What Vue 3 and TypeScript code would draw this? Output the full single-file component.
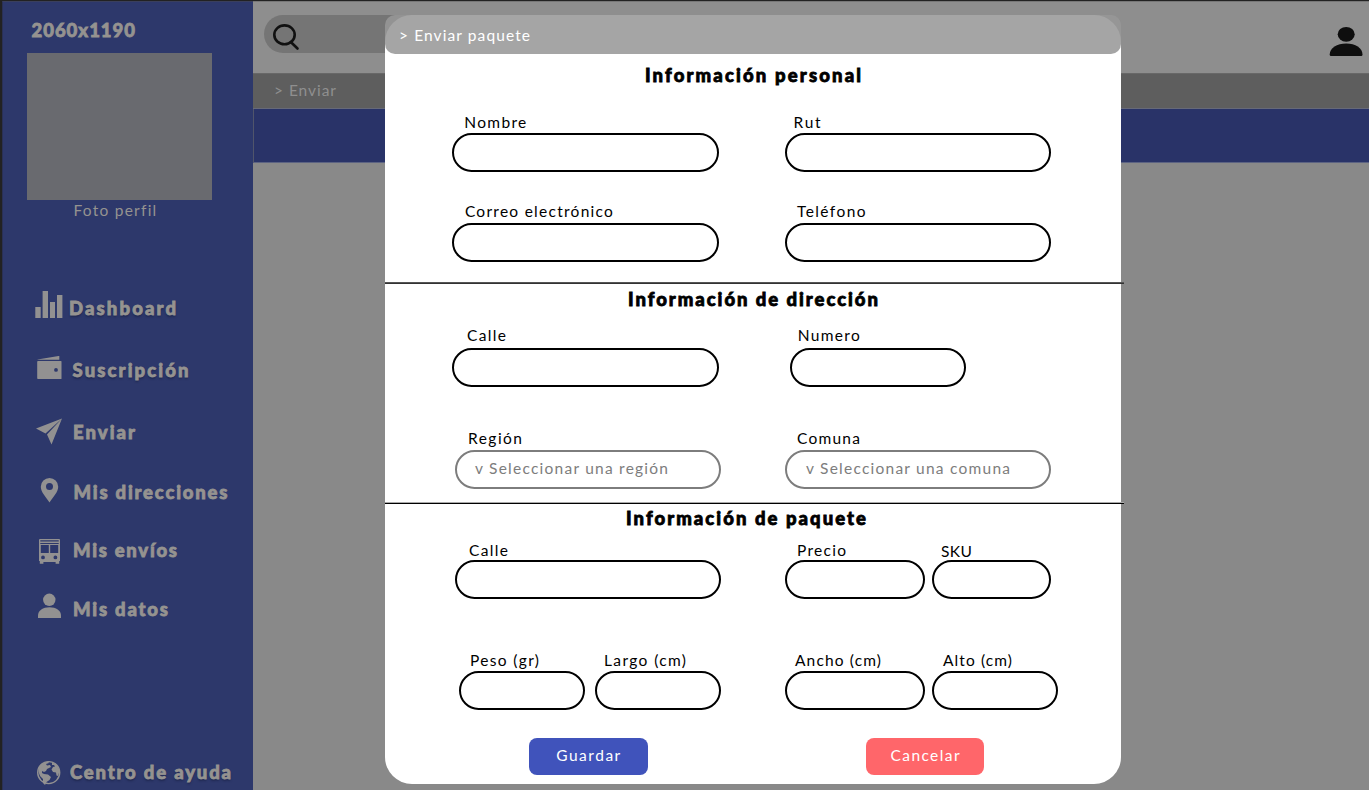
<script setup lang="ts">
interface NavItem {
  text: string
  icon: string
  width: number
  indent: number
  drop: number
  shadow?: boolean
}
interface Field {
  label: string
  labelWidth: number
  indent: number
  offset: number
  width: number
  placeholder?: string
  placeholderWidth?: number
  placeholderIndent?: number
  low?: boolean
}
interface Row {
  id: string
  fields: Field[]
}
interface Section {
  id: string
  title: string
  titleWidth: number
  rows: Row[]
}

const nav: NavItem[] = [
  { text: 'Dashboard', icon: 'bars', width: 107, indent: 6, drop: 5, shadow: true },
  { text: 'Suscripción', icon: 'wallet', width: 116, indent: 9.5, drop: 3, shadow: true },
  { text: 'Enviar', icon: 'plane', width: 62, indent: 10, drop: 3 },
  { text: 'Mis direcciones', icon: 'pin', width: 154, indent: 10.5, drop: 3 },
  { text: 'Mis envíos', icon: 'bus', width: 104, indent: 10, drop: 0 },
  { text: 'Mis datos', icon: 'person', width: 95, indent: 10, drop: 5 },
]

const sections: Section[] = [
  {
    id: 'personal', title: 'Información personal', titleWidth: 216,
    rows: [
      { id: 'r1', fields: [
        { label: 'Nombre', labelWidth: 62, indent: 12, offset: 67.3, width: 266.3 },
        { label: 'Rut', labelWidth: 27, indent: 8.6, offset: 66.4, width: 266.3 },
      ] },
      { id: 'r2', fields: [
        { label: 'Correo electrónico', labelWidth: 148, indent: 12.6, offset: 67.3, width: 266.3 },
        { label: 'Teléfono', labelWidth: 68.5, indent: 12, offset: 66.4, width: 266.3 },
      ] },
    ],
  },
  {
    id: 'direccion', title: 'Información de dirección', titleWidth: 250,
    rows: [
      { id: 'r3', fields: [
        { label: 'Calle', labelWidth: 39, indent: 14.7, offset: 67.3, width: 266.3 },
        { label: 'Numero', labelWidth: 62, indent: 7.6, offset: 71.6, width: 176 },
      ] },
      { id: 'r4', fields: [
        { label: 'Región', labelWidth: 54, indent: 13, offset: 70, width: 266.3, placeholder: 'v Seleccionar una región', placeholderWidth: 193, placeholderIndent: 18 },
        { label: 'Comuna', labelWidth: 63, indent: 12, offset: 63.7, width: 266.3, placeholder: 'v Seleccionar una comuna', placeholderWidth: 204, placeholderIndent: 19 },
      ] },
    ],
  },
  {
    id: 'paquete', title: 'Información de paquete', titleWidth: 240,
    rows: [
      { id: 'r5', fields: [
        { label: 'Calle', labelWidth: 39, indent: 14, offset: 70, width: 266.3 },
        { label: 'Precio', labelWidth: 49, indent: 12, offset: 63.7, width: 140 },
        { label: 'SKU', labelWidth: 31, indent: 9, offset: 7, width: 119.3, low: true },
      ] },
      { id: 'r6', fields: [
        { label: 'Peso (gr)', labelWidth: 69, indent: 11, offset: 74, width: 126.3 },
        { label: 'Largo (cm)', labelWidth: 82, indent: 9, offset: 9.7, width: 126.3 },
        { label: 'Ancho (cm)', labelWidth: 86, indent: 10, offset: 63.7, width: 140 },
        { label: 'Alto (cm)', labelWidth: 69, indent: 11, offset: 7, width: 126.3 },
      ] },
    ],
  },
]

// Tracks a single line of text so that it spans the given width.
const vTrack = {
  mounted(el: HTMLElement, binding: { value: number }) {
    const gaps = (el.textContent ?? '').length - 1
    const natural = el.getBoundingClientRect().width
    if (gaps > 0) {
      const spacing = (binding.value - natural) / gaps
      el.style.letterSpacing = spacing.toFixed(3) + 'px'
      el.style.marginRight = (-spacing).toFixed(3) + 'px'
    }
  },
}
</script>

<template>
  <div class="screen">
    <aside class="sidebar">
      <div class="size"><span v-track="103.5">2060x1190</span></div>
      <div class="photo"></div>
      <div class="caption"><span v-track="82.5">Foto perfil</span></div>
      <nav class="nav">
        <a v-for="item in nav" :key="item.text" class="nav-item">
          <svg class="nav-icon" viewBox="0 0 28 28">
            <g v-if="item.icon === 'bars'">
              <path d="M0.3 16h5.4v11H0.3zM7.6 0h5.4v27H7.6zM15 11h5v16h-5zM22 4h5.4v23H22z" />
            </g>
            <g v-else-if="item.icon === 'wallet'">
              <path d="M2.5 4.5 23.5 1h.8v3.8H2.5z" />
              <path fill-rule="evenodd" d="M3 6h23q.5 0 .5.5v17q0 .5-.5.5H3q-.8 0-.8-.8V6.8q0-.8.8-.8zM21 13a1.900 1.900 0 1 0 0 3.800a1.900 1.900 0 1 0 0-3.800z" />
            </g>
            <g v-else-if="item.icon === 'plane'">
              <path d="M1 11.500 27 1.500 10.500 16.500zM27 1.500 16.500 27.500 12 17.500z" />
            </g>
            <g v-else-if="item.icon === 'pin'">
              <path fill-rule="evenodd" d="M14.500 1A8.700 8.700 0 0 0 5.800 9.700C5.800 15 11 20 14.500 25.500C18 20 23.200 15 23.200 9.700A8.700 8.700 0 0 0 14.500 1zM14.500 5.900a3.500 3.500 0 1 1 0 7a3.500 3.500 0 1 1 0-7z" />
            </g>
            <g v-else-if="item.icon === 'bus'">
              <path fill-rule="evenodd" d="M5 1h19q1 0 1 1v21h-.8v2.800h-3.600V24H8.400v1.800H4.800V23H4V2q0-1 1-1zM5.300 2.200V3.500H23.700V2.200zM5.300 5V6H23.700V5zM5.800 7v8H13.800V7zM15.200 7v8h8V7zM8 17.500a1.900 1.900 0 1 0 0 3.800a1.900 1.900 0 1 0 0-3.800zM20.400 17.500a1.900 1.900 0 1 0 0 3.800a1.900 1.900 0 1 0 0-3.800z" />
            </g>
            <g v-else>
              <circle cx="14.300" cy="7.800" r="6.200" />
              <path d="M3 26v-2.500C3 18.500 8 15.300 14.500 15.300S26 18.500 26 23.500V26z" />
            </g>
          </svg>
          <span
            class="nav-text"
            :class="{ shadow: item.shadow }"
            :style="{ marginLeft: item.indent + 'px', marginTop: item.drop + 'px' }"
          >
            <span v-track="item.width">{{ item.text }}</span>
          </span>
        </a>
      </nav>
      <a class="nav-item help">
        <svg class="nav-icon" viewBox="0 0 28 28">
          <circle class="globe-ring" cx="13.700" cy="13.600" r="11" />
          <path d="M3.500 9Q6 3.500 13 2.500l1 1.500-3 1 1 1.500 3-.5 1 2-4 2-1 2-2 1-2-1 0 2 2 1 4 .5 3 2.500-1.500 3-3 2-1.500 3-2-2v-4l-3-3-1.500-4z" />
          <path d="M17 3.500l4 1.500 3 5 .3 3-1.300 4-1.500-.5-.5-3-3-.5-1.500-2.500 1.500-2.500 2-.5-1-1.500-2 0z" />
        </svg>
        <span class="nav-text help-text shadow"><span v-track="161">Centro de ayuda</span></span>
      </a>
    </aside>

    <main class="main">
      <header class="topbar">
        <div class="search">
          <svg class="search-icon" viewBox="0 0 30 30">
            <ellipse cx="12.500" cy="12.800" rx="10.200" ry="9.400" />
            <path d="M18.800 20 25.500 26.500" />
          </svg>
        </div>
        <svg class="user" viewBox="0 0 34 32">
          <ellipse cx="17.200" cy="9.300" rx="8.500" ry="7.400" />
          <path d="M.7 29.500C.7 23 8 18.500 17.200 18.500S33.500 23 33.500 29.500Q33.500 31 32.300 31H2Q.7 31 .7 29.500z" />
        </svg>
      </header>
      <div class="crumbs"><span v-track="62">&gt; Enviar</span></div>
      <div class="band"></div>
    </main>

    <div class="modal">
      <header class="modal-head"><span v-track="131">&gt; Enviar paquete</span></header>
      <section v-for="section in sections" :key="section.id" class="section" :class="section.id">
        <h2 class="title"><span v-track="section.titleWidth">{{ section.title }}</span></h2>
        <div v-for="row in section.rows" :key="row.id" class="row" :class="row.id">
          <div
            v-for="field in row.fields"
            :key="field.label"
            class="field"
            :style="{ marginLeft: field.offset + 'px', width: field.width + 'px' }"
          >
            <div class="label" :class="{ low: field.low }" :style="{ paddingLeft: field.indent + 'px' }">
              <span v-track="field.labelWidth">{{ field.label }}</span>
            </div>
            <div v-if="field.placeholder" class="box select" :style="{ paddingLeft: field.placeholderIndent + 'px' }">
              <span v-track="field.placeholderWidth ?? 0">{{ field.placeholder }}</span>
            </div>
            <div v-else class="box"></div>
          </div>
        </div>
      </section>
      <footer class="actions">
        <button class="button save"><span v-track="64">Guardar</span></button>
        <button class="button cancel"><span v-track="69">Cancelar</span></button>
      </footer>
    </div>
  </div>
</template>

<style>
body {
  margin: 0;
  overflow: hidden;
}
</style>

<style scoped>
.screen {
  position: relative;
  display: flex;
  box-sizing: border-box;
  width: 1369px;
  height: 790px;
  padding: 1px 0 0 2px;
  overflow: hidden;
  background: #222222;
  font-family: Lato, "Noto Sans", sans-serif;
  font-size: 15.5px;
  line-height: 20px;
  white-space: nowrap;
}
.sidebar {
  flex: none;
  display: flex;
  flex-direction: column;
  box-sizing: border-box;
  width: 251px;
  height: 789px;
  border-left: 1px solid #2a3055;
  border-top: 1px solid #3a3f5c;
  background: #2d386b;
  color: #959390;
}
.size,
.nav-text,
.title {
  font-size: 18.5px;
  font-weight: 900;
  line-height: 24px;
  -webkit-text-stroke: 0.8px currentColor;
}
.size {
  margin: 16px 0 0 28.5px;
  height: 24px;
}
.photo {
  width: 185px;
  height: 147px;
  margin: 10.5px 0 0 24px;
  background: #696a6f;
}
.caption {
  margin: 0.5px 0 0 70.5px;
  height: 20px;
}
.nav {
  display: grid;
  grid-template-rows: 64px 62px 60px 61px 54px 28px;
  margin: 71px 0 0 32px;
}
.nav-item {
  display: flex;
  align-items: flex-start;
  height: 28px;
}
.nav-icon {
  flex: none;
  width: 28px;
  height: 28px;
  fill: #929191;
}
.globe-ring {
  fill: none;
  stroke: #929191;
  stroke-width: 1.4;
}
.shadow {
  text-shadow: 0 2px 2px rgba(20, 25, 55, 0.5);
}
.help {
  margin: 139px 0 0 32px;
}
.help-text {
  margin: 1px 0 0 7px;
}
.main {
  flex: 1;
  background: #898989;
}
.topbar {
  display: flex;
  justify-content: space-between;
  box-sizing: border-box;
  height: 72px;
  padding: 13px 6px 0 11px;
  border-top: 1px solid #777777;
  background: #8e8e8e;
}
.search {
  box-sizing: border-box;
  width: 830px;
  height: 38.5px;
  padding: 7px 8px;
  margin-top: -0.5px;
  border-radius: 19px;
  background: #757575;
}
.search-icon {
  display: block;
  width: 30px;
  height: 30px;
  fill: none;
  stroke: #111111;
  stroke-width: 2.6;
  stroke-linecap: round;
}
.user {
  width: 34px;
  height: 32px;
  margin-top: 10px;
  fill: #0e0e0e;
}
.crumbs {
  box-sizing: border-box;
  height: 36px;
  padding: 6px 0 0 21px;
  border-top: 1px solid #686868;
  border-bottom: 1px solid #666979;
  background: #5e5e5e;
  color: #8f8f8f;
}
.band {
  box-sizing: border-box;
  height: 54px;
  border-left: 1px solid #50556b;
  border-bottom: 1px solid #5c6382;
  background: #293368;
}
.modal {
  position: absolute;
  left: 385px;
  top: 15px;
  box-sizing: border-box;
  width: 736px;
  height: 769px;
  border-radius: 27px;
  background: #ffffff;
  color: #000000;
}
.modal-head {
  box-sizing: border-box;
  height: 39px;
  padding: 10px 0 0 14px;
  border-radius: 10px;
  background: rgba(152, 152, 152, 0.87);
  color: #ffffff;
}
.section {
  display: flow-root;
  box-sizing: border-box;
}
.personal {
  height: 228px;
}
.direccion {
  width: 739px;
  height: 220px;
  background: linear-gradient(#555555 1px, #333333 1px, #333333 2px, transparent 2px);
  padding-top: 2px;
}
.paquete {
  width: 739px;
  height: 208px;
  background: linear-gradient(#aaaaaa 1px, #000000 1px, #000000 2px, transparent 2px);
  padding-top: 2px;
}
.title {
  height: 24px;
  margin: 9px 0 0;
}
.personal .title {
  padding-left: 260px;
}
.direccion .title {
  margin-top: 3px;
  padding-left: 243px;
}
.paquete .title {
  margin-top: 2px;
  padding-left: 241px;
}
.row {
  display: flex;
}
.r1 {
  margin-top: 25px;
}
.r2 {
  margin-top: 29px;
}
.r3 {
  margin-top: 14px;
}
.r4 {
  margin-top: 41px;
}
.r5 {
  margin-top: 10px;
}
.r6 {
  margin-top: 51px;
}
.field {
  flex: none;
}
.label {
  height: 20px;
}
.low span {
  position: relative;
  top: 1px;
}
.r1 .label,
.r6 .label {
  margin-bottom: 1px;
}
.r2 .label,
.r4 .label {
  margin-bottom: 2px;
}
.r3 .label {
  margin-bottom: 3px;
}
.box {
  box-sizing: border-box;
  height: 39px;
  border: 2px solid #000000;
  border-radius: 20px;
}
.select {
  padding-top: 6px;
  border-color: #7d7d7d;
  color: #7d7d7d;
}
.actions {
  display: flex;
  gap: 218.3px;
  margin: 28px 0 0 144px;
}
.button {
  width: 118.5px;
  height: 36.7px;
  padding: 0 0 3px;
  border: 0;
  border-radius: 8px;
  color: #ffffff;
  font: inherit;
}
.save {
  background: #4053bb;
}
.cancel {
  background: #ff666a;
}
</style>
